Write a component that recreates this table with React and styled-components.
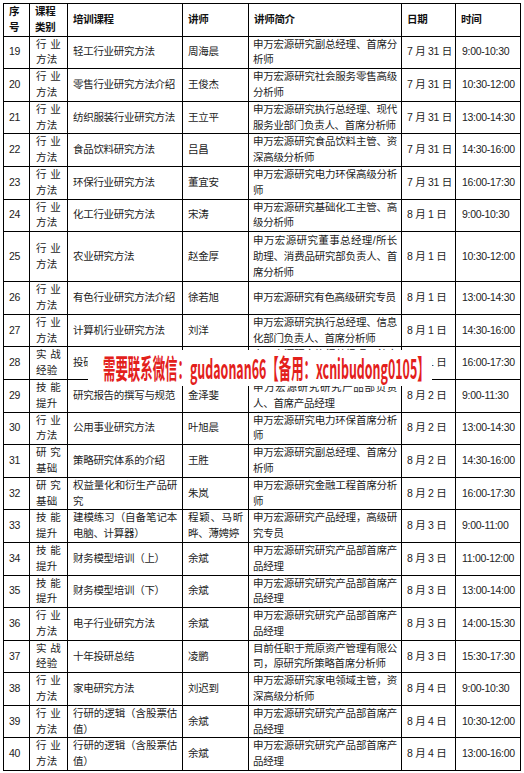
import React from "react";
import styled, { createGlobalStyle } from "styled-components";

const GlobalStyle = createGlobalStyle`
  html, body {
    margin: 0;
    padding: 0;
    background: #ffffff;
  }
`;

const widths = [26, 38, 115, 66, 153, 54, 65];

const same = ["申万宏源研究研究产品部首席产", "品经理"];

const rows = [
  { no: 19, cat: ["行业", "方法"], course: ["轻工行业研究方法"], who: ["周海晨"], desc: ["申万宏源研究副总经理、首席分", "析师"], date: "7 月 31 日", time: "9:00-10:30" },
  { no: 20, cat: ["行业", "方法"], course: ["零售行业研究方法介绍"], who: ["王俊杰"], desc: ["申万宏源研究社会服务零售高级", "分析师"], date: "7 月 31 日", time: "10:30-12:00" },
  { no: 21, cat: ["行业", "方法"], course: ["纺织服装行业研究方法"], who: ["王立平"], desc: ["申万宏源研究执行总经理、现代", "服务业部门负责人、首席分析师"], date: "7 月 31 日", time: "13:00-14:30" },
  { no: 22, cat: ["行业", "方法"], course: ["食品饮料研究方法"], who: ["吕昌"], desc: ["申万宏源研究食品饮料主管、资", "深高级分析师"], date: "7 月 31 日", time: "14:30-16:00" },
  { no: 23, cat: ["行业", "方法"], course: ["环保行业研究方法"], who: ["董宜安"], desc: ["申万宏源研究电力环保高级分析", "师"], date: "7 月 31 日", time: "16:00-17:30" },
  { no: 24, cat: ["行业", "方法"], course: ["化工行业研究方法"], who: ["宋涛"], desc: ["申万宏源研究基础化工主管、高", "级分析师"], date: "8 月 1 日", time: "9:00-10:30" },
  { no: 25, cat: ["行业", "方法"], course: ["农业研究方法"], who: ["赵金厚"], desc: ["申万宏源研究董事总经理/所长", "助理、消费品研究部负责人、首", "席分析师"], date: "8 月 1 日", time: "10:30-12:00", tall: true },
  { no: 26, cat: ["行业", "方法"], course: ["有色行业研究方法介绍"], who: ["徐若旭"], desc: ["申万宏源研究有色高级研究专员"], date: "8 月 1 日", time: "13:00-14:30" },
  { no: 27, cat: ["行业", "方法"], course: ["计算机行业研究方法"], who: ["刘洋"], desc: ["申万宏源研究执行总经理、信息", "化部门负责人、首席分析师"], date: "8 月 1 日", time: "14:30-16:00" },
  { no: 28, cat: ["实战", "经验"], course: ["投研体系的构建"], who: ["董宏"], desc: ["申万宏源研究执行总经理、首席", "策略分析师"], date: "8 月 1 日", time: "16:00-17:30" },
  { no: 29, cat: ["技能", "提升"], course: ["研究报告的撰写与规范"], who: ["金泽斐"], desc: ["申万宏源研究研究产品部负责", "人、首席产品经理"], date: "8 月 2 日", time: "9:00-11:30" },
  { no: 30, cat: ["行业", "方法"], course: ["公用事业研究方法"], who: ["叶旭晨"], desc: ["申万宏源研究电力环保首席分析", "师"], date: "8 月 2 日", time: "13:00-14:30" },
  { no: 31, cat: ["研究", "基础"], course: ["策略研究体系的介绍"], who: ["王胜"], desc: ["申万宏源研究副总经理、首席分", "析师"], date: "8 月 2 日", time: "14:30-16:00" },
  { no: 32, cat: ["研究", "基础"], course: ["权益量化和衍生产品研", "究"], who: ["朱岚"], desc: ["申万宏源研究金融工程首席分析", "师"], date: "8 月 2 日", time: "16:00-17:30" },
  { no: 33, cat: ["技能", "提升"], course: ["建模练习（自备笔记本", "电脑、计算器）"], who: ["程颖、马昕", "晔、薄娉婷"], desc: ["申万宏源研究产品经理，高级研", "究专员"], date: "8 月 3 日", time: "9:00-11:00" },
  { no: 34, cat: ["技能", "提升"], course: ["财务模型培训（上）"], who: ["余斌"], desc: same, date: "8 月 3 日", time: "11:00-12:00" },
  { no: 35, cat: ["技能", "提升"], course: ["财务模型培训（下）"], who: ["余斌"], desc: same, date: "8 月 3 日", time: "13:00-14:00" },
  { no: 36, cat: ["行业", "方法"], course: ["电子行业研究方法"], who: ["余斌"], desc: same, date: "8 月 3 日", time: "14:00-15:30" },
  { no: 37, cat: ["实战", "经验"], course: ["十年投研总结"], who: ["凌鹏"], desc: ["目前任职于荒原资产管理有限公", "司，原研究所策略首席分析师"], date: "8 月 3 日", time: "15:30-17:30" },
  { no: 38, cat: ["行业", "方法"], course: ["家电研究方法"], who: ["刘迟到"], desc: ["申万宏源研究家电领域主管，资", "深高级分析师"], date: "8 月 4 日", time: "9:00-10:30" },
  { no: 39, cat: ["行业", "方法"], course: ["行研的逻辑（含股票估", "值）"], who: ["余斌"], desc: same, date: "8 月 4 日", time: "10:30-12:00" },
  { no: 40, cat: ["行业", "方法"], course: ["行研的逻辑（含股票估", "值）"], who: ["余斌"], desc: same, date: "8 月 4 日", time: "13:00-16:00" },
];

const Lines = ({ items }) =>
  items.map((t, i) => (
    <Line key={i} $fill={items.length > 1 && i < items.length - 1}>
      {t}
    </Line>
  ));

export default function App() {
  return (
    <Page>
      <GlobalStyle />
      <Sheet>
        <colgroup>
          {widths.map((w, i) => (
            <col key={i} style={{ width: w }} />
          ))}
        </colgroup>
        <thead>
          <tr>
            <HeadCell>序<br />号</HeadCell>
            <HeadCell>课程<br />类别</HeadCell>
            <HeadCell>培训课程</HeadCell>
            <HeadCell>讲师</HeadCell>
            <HeadCell>讲师简介</HeadCell>
            <HeadCell>日期</HeadCell>
            <HeadCell>时间</HeadCell>
          </tr>
        </thead>
        <tbody>
          {rows.map((r) => (
            <Row key={r.no} $tall={r.tall}>
              <Cell>{r.no}</Cell>
              <Cell $pad={6} $spaced>
                <Lines items={r.cat} />
              </Cell>
              <Cell>
                <Lines items={r.course} />
              </Cell>
              <Cell>
                <Lines items={r.who} />
              </Cell>
              <Cell $pad={4}>
                <Lines items={r.desc} />
              </Cell>
              <Cell>{r.date}</Cell>
              <Cell $pad={6}>{r.time}</Cell>
            </Row>
          ))}
        </tbody>
      </Sheet>
      <Stamp>
        <StampText>需要联系微信：gudaonan66【备用：xcnibudong0105】</StampText>
      </Stamp>
    </Page>
  );
}

const Page = styled.div`
  position: relative;
  width: 524px;
  padding: 3px 0 0 3px;
  box-sizing: border-box;
`;

const Sheet = styled.table`
  width: 517px;
  table-layout: fixed;
  border-collapse: collapse;
  font-family: "Liberation Sans", "Noto Sans CJK SC", sans-serif;
  font-size: 10.5px;
  color: #1c1c1c;
`;

const Row = styled.tr`
  height: ${(p) => (p.$tall ? "50px" : "auto")};
`;

const HeadCell = styled.th`
  border: 1px solid #000;
  padding: 0 5px;
  line-height: 15.8px;
  font-weight: 700;
  text-align: left;
  vertical-align: middle;
  letter-spacing: -0.3px;
  color: #111;
`;

const Cell = styled.td`
  border: 1px solid #000;
  padding: 0 ${(p) => p.$pad ?? 5}px;
  line-height: 15.8px;
  text-align: left;
  vertical-align: middle;
  white-space: nowrap;
  overflow: hidden;
  letter-spacing: ${(p) => (p.$spaced ? "0.2px" : "-0.3px")};
`;

const Line = styled.span`
  display: block;
  white-space: nowrap;
  text-align: ${(p) => (p.$fill ? "justify" : "left")};
  text-align-last: ${(p) => (p.$fill ? "justify" : "auto")};
`;

const Stamp = styled.div`
  position: absolute;
  left: 88px;
  top: 350px;
  width: 344px;
  height: 36px;
  background: #ffffff;
  overflow: hidden;
`;

const StampText = styled.div`
  position: absolute;
  left: 15px;
  top: 2px;
  white-space: nowrap;
  font-family: "Noto Sans CJK SC", sans-serif;
  font-weight: 700;
  font-size: 27px;
  line-height: 32px;
  color: #e3201b;
  transform: scaleX(0.46);
  transform-origin: left center;
`;
